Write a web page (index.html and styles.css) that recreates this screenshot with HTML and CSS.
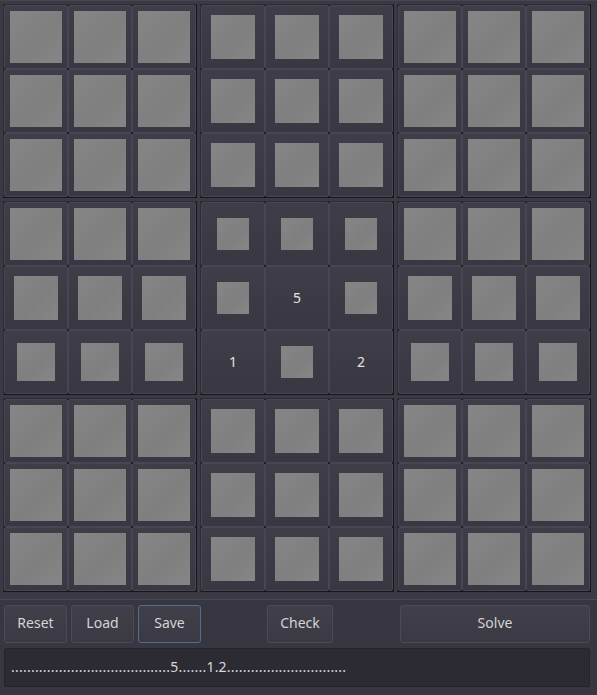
FILE: index.html
```html
<!DOCTYPE html>
<html>
<head>
<meta charset="utf-8">
<link rel="stylesheet" href="styles.css">
</head>
<body>
<div class="app">
  <div class="board">
    <div class="box">
      <div class="cell"><span class="sq s52"></span></div><div class="cell"><span class="sq s52"></span></div><div class="cell"><span class="sq s52"></span></div>
      <div class="cell"><span class="sq s52"></span></div><div class="cell"><span class="sq s52"></span></div><div class="cell"><span class="sq s52"></span></div>
      <div class="cell"><span class="sq s52"></span></div><div class="cell"><span class="sq s52"></span></div><div class="cell"><span class="sq s52"></span></div>
    </div>
    <div class="box">
      <div class="cell"><span class="sq s44"></span></div><div class="cell"><span class="sq s44"></span></div><div class="cell"><span class="sq s44"></span></div>
      <div class="cell"><span class="sq s44"></span></div><div class="cell"><span class="sq s44"></span></div><div class="cell"><span class="sq s44"></span></div>
      <div class="cell"><span class="sq s44"></span></div><div class="cell"><span class="sq s44"></span></div><div class="cell"><span class="sq s44"></span></div>
    </div>
    <div class="box">
      <div class="cell"><span class="sq s52"></span></div><div class="cell"><span class="sq s52"></span></div><div class="cell"><span class="sq s52"></span></div>
      <div class="cell"><span class="sq s52"></span></div><div class="cell"><span class="sq s52"></span></div><div class="cell"><span class="sq s52"></span></div>
      <div class="cell"><span class="sq s52"></span></div><div class="cell"><span class="sq s52"></span></div><div class="cell"><span class="sq s52"></span></div>
    </div>

    <div class="box">
      <div class="cell"><span class="sq s52"></span></div><div class="cell"><span class="sq s52"></span></div><div class="cell"><span class="sq s52"></span></div>
      <div class="cell"><span class="sq s44"></span></div><div class="cell"><span class="sq s44"></span></div><div class="cell"><span class="sq s44"></span></div>
      <div class="cell"><span class="sq s38"></span></div><div class="cell"><span class="sq s38"></span></div><div class="cell"><span class="sq s38"></span></div>
    </div>
    <div class="box">
      <div class="cell"><span class="sq s32"></span></div><div class="cell"><span class="sq s32"></span></div><div class="cell"><span class="sq s32"></span></div>
      <div class="cell"><span class="sq s32"></span></div><div class="cell"><span class="num">5</span></div><div class="cell"><span class="sq s32"></span></div>
      <div class="cell"><span class="num">1</span></div><div class="cell"><span class="sq s32"></span></div><div class="cell"><span class="num">2</span></div>
    </div>
    <div class="box">
      <div class="cell"><span class="sq s52"></span></div><div class="cell"><span class="sq s52"></span></div><div class="cell"><span class="sq s52"></span></div>
      <div class="cell"><span class="sq s44"></span></div><div class="cell"><span class="sq s44"></span></div><div class="cell"><span class="sq s44"></span></div>
      <div class="cell"><span class="sq s38"></span></div><div class="cell"><span class="sq s38"></span></div><div class="cell"><span class="sq s38"></span></div>
    </div>

    <div class="box">
      <div class="cell"><span class="sq s52"></span></div><div class="cell"><span class="sq s52"></span></div><div class="cell"><span class="sq s52"></span></div>
      <div class="cell"><span class="sq s52"></span></div><div class="cell"><span class="sq s52"></span></div><div class="cell"><span class="sq s52"></span></div>
      <div class="cell"><span class="sq s52"></span></div><div class="cell"><span class="sq s52"></span></div><div class="cell"><span class="sq s52"></span></div>
    </div>
    <div class="box">
      <div class="cell"><span class="sq s44"></span></div><div class="cell"><span class="sq s44"></span></div><div class="cell"><span class="sq s44"></span></div>
      <div class="cell"><span class="sq s44"></span></div><div class="cell"><span class="sq s44"></span></div><div class="cell"><span class="sq s44"></span></div>
      <div class="cell"><span class="sq s44"></span></div><div class="cell"><span class="sq s44"></span></div><div class="cell"><span class="sq s44"></span></div>
    </div>
    <div class="box">
      <div class="cell"><span class="sq s52"></span></div><div class="cell"><span class="sq s52"></span></div><div class="cell"><span class="sq s52"></span></div>
      <div class="cell"><span class="sq s52"></span></div><div class="cell"><span class="sq s52"></span></div><div class="cell"><span class="sq s52"></span></div>
      <div class="cell"><span class="sq s52"></span></div><div class="cell"><span class="sq s52"></span></div><div class="cell"><span class="sq s52"></span></div>
    </div>
  </div>

  <div class="controls">
    <div class="buttons">
      <button class="btn">Reset</button>
      <button class="btn">Load</button>
      <button class="btn focused">Save</button>
      <button class="btn check">Check</button>
      <button class="btn solve">Solve</button>
    </div>
    <div class="field">........................................5.......1.2..............................</div>
  </div>
</div>
</body>
</html>
```

FILE: styles.css
```css
html, body {
  margin: 0;
  padding: 0;
}

body {
  width: 597px;
  height: 695px;
  overflow: hidden;
  background: #3a3944;
  font-family: "Noto Sans", "DejaVu Sans", sans-serif;
  font-size: 14px;
  color: #dcdcdc;
}

.app {
  display: flex;
  flex-direction: column;
  height: 695px;
  border-top: 1px solid #45444f;
  box-sizing: border-box;
}

.board {
  height: 598px;
  box-sizing: border-box;
  padding: 4px 0 0 4px;
  display: grid;
  grid-template-columns: repeat(3, 192px);
  grid-template-rows: repeat(3, 192px);
  gap: 5px;
  align-content: start;
}

.box {
  position: relative;
  display: grid;
  grid-template-columns: repeat(3, 64px);
  grid-template-rows: repeat(3, 64px);
  background: #1c1b21;
}

.box::after {
  content: "";
  position: absolute;
  inset: -1px -1px -1px -1px;
  border: 1px solid #2d2c35;
  border-right-color: #17161b;
  border-bottom-color: #17161b;
  pointer-events: none;
}

.cell {
  box-sizing: border-box;
  border: 1px solid #474654;
  border-radius: 2px;
  background: linear-gradient(#3e3d48, #393842);
  display: flex;
  align-items: center;
  justify-content: center;
}

.sq {
  display: block;
  background: linear-gradient(135deg, #868686, #7f7f7f 55%, #868686);
}

.s52 { width: 52px; height: 52px; }
.s44 { width: 44px; height: 44px; }
.s38 { width: 38px; height: 38px; }
.s32 { width: 32px; height: 32px; }

.num {
  color: #e2e2e2;
  font-size: 14px;
  line-height: 1;
}

.controls {
  flex: 1;
  border-top: 1px solid #4a4956;
  background: #383741;
  padding: 5px 7px 0 4px;
  display: flex;
  flex-direction: column;
  gap: 5px;
}

.buttons {
  display: flex;
  gap: 4px;
  height: 38px;
}

.btn {
  width: 63px;
  height: 38px;
  box-sizing: border-box;
  border: 1px solid #4b4a57;
  border-radius: 3px;
  background: linear-gradient(#403f4a, #3a3944);
  color: #d4d4d4;
  font-family: "Noto Sans", "DejaVu Sans", sans-serif;
  font-size: 14px;
  padding: 0 0 3px 0;
}

.focused {
  border-color: #4f6f91;
}

.check {
  width: 66px;
  margin-left: 62px;
}

.solve {
  width: 190px;
  margin-left: 63px;
}

.field {
  height: 39px;
  box-sizing: border-box;
  background: #2c2b34;
  border: 1px solid #25242b;
  border-radius: 2px;
  padding: 0 0 3px 6px;
  display: flex;
  align-items: center;
  font-size: 14px;
  letter-spacing: 0.23px;
  color: #d8d8d8;
  white-space: nowrap;
  overflow: hidden;
}
```
